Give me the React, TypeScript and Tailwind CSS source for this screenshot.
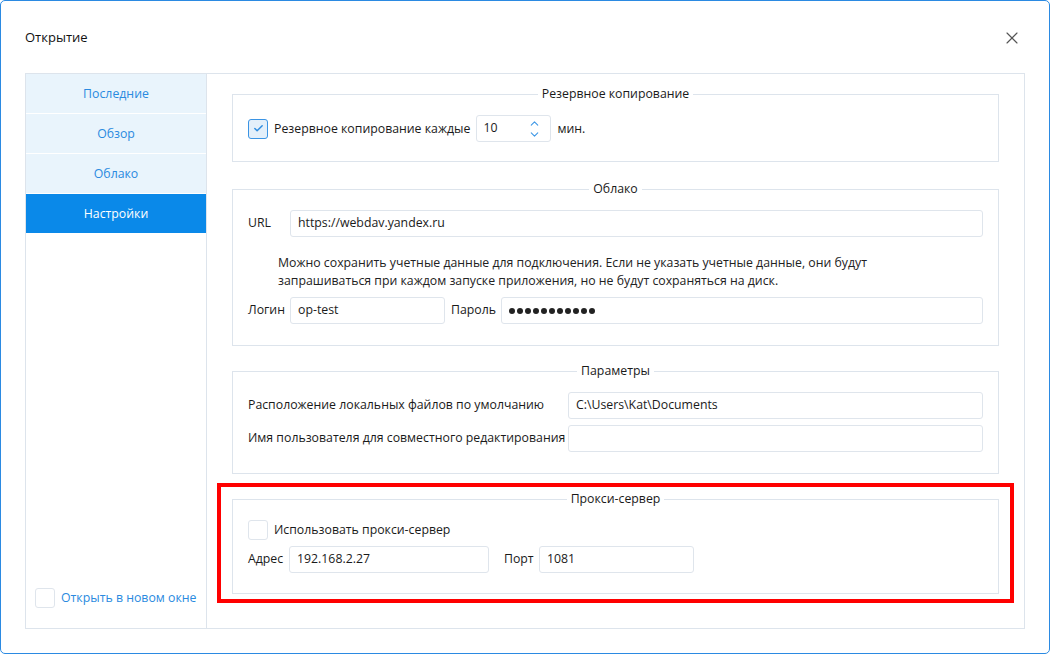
import { X, ChevronUp, ChevronDown, Check } from 'lucide-react';

const font = { fontFamily: '"Open Sans", "Noto Sans", sans-serif' };

function CheckBox({ checked = false }: { checked?: boolean }) {
  return (
    <div
      className={`w-[20px] h-[20px] rounded-[3px] border flex items-center justify-center shrink-0 ${
        checked ? 'border-[#3b94e4] bg-[#e3effa]' : 'border-[#dfe5ec] bg-white'
      }`}
    >
      {checked && <Check size={11} strokeWidth={3.2} className="text-[#2e8ce0]" />}
    </div>
  );
}

function Field({
  value = '',
  className = '',
  children,
}: {
  value?: string;
  className?: string;
  children?: React.ReactNode;
}) {
  return (
    <div
      className={`h-[27px] border border-[#dfe5ec] rounded-[3px] bg-white flex items-center px-[7px] text-[#1a1a1a] ${className}`}
    >
      {children ?? value}
    </div>
  );
}

function Group({ title, children, className = '' }: { title: string; children: React.ReactNode; className?: string }) {
  return (
    <fieldset className={`border border-[#dde4ec] px-[15px] ${className}`}>
      <legend className="mx-auto px-[4px] leading-[18px] text-[#1a1a1a]">{title}</legend>
      {children}
    </fieldset>
  );
}

const tabs = ['Последние', 'Обзор', 'Облако', 'Настройки'];

export default function App() {
  return (
    <div
      style={font}
      className="w-[1050px] h-[654px] bg-white border border-[#2b8ae2] rounded-[5px] text-[12.3px] text-[#1a1a1a] flex flex-col whitespace-nowrap"
    >
      <div className="h-[72px] flex items-center justify-between pl-[24px] pr-[27px] pt-[2px] shrink-0">
        <span className="text-[13px] text-[#111]">Открытие</span>
        <X size={20} strokeWidth={1.4} className="text-[#555]" />
      </div>

      <div className="mx-[24px] h-[556px] border border-[#dde4ec] flex">
        <div className="w-[181px] border-r border-[#dde4ec] flex flex-col">
          {tabs.map((t) => (
            <div
              key={t}
              className={`h-[40px] pt-[2px] flex items-center justify-center border-b border-white ${
                t === 'Настройки' ? 'bg-[#0a89e9] text-white' : 'bg-[#e9f4fc] text-[#2a8ae0]'
              }`}
            >
              {t}
            </div>
          ))}
          <div className="flex-1" />
          <div className="flex items-center gap-[6px] pl-[9px] pb-[20px]">
            <CheckBox />
            <span className="text-[#2a8ae0]">Открыть в новом окне</span>
          </div>
        </div>

        <div className="flex-1 px-[25px] pt-[11px]">
          <Group title="Резервное копирование" className="pb-[19px]">
            <div className="mt-[12px] flex items-center h-[27px]">
              <CheckBox checked />
              <span className="ml-[6px] pt-[1px]">Резервное копирование каждые</span>
              <div className="ml-[6px] w-[75px] h-[27px] border border-[#dfe5ec] rounded-[3px] flex items-center justify-between pl-[6px] pr-[9px]">
                <span>10</span>
                <div className="flex flex-col items-center text-[#3f98e6] -space-y-[2px]">
                  <ChevronUp size={13} strokeWidth={2} />
                  <ChevronDown size={13} strokeWidth={2} />
                </div>
              </div>
              <span className="ml-[6px] pt-[1px]">мин.</span>
            </div>
          </Group>

          <Group title="Облако" className="mt-[18px] pb-[21px]">
            <div className="mt-[12px] flex items-center">
              <span className="w-[42px]">URL</span>
              <Field value="https://webdav.yandex.ru" className="flex-1" />
            </div>
            <p className="mt-[17px] pl-[30px] leading-[18px] text-[#222]">
              Можно сохранить учетные данные для подключения. Если не указать учетные данные, они будут
              <br />
              запрашиваться при каждом запуске приложения, но не будут сохраняться на диск.
            </p>
            <div className="mt-[7px] flex items-center">
              <span className="w-[42px]">Логин</span>
              <Field value="op-test" className="w-[155px]" />
              <span className="ml-[6px] w-[50px]">Пароль</span>
              <Field className="flex-1">
                <div className="flex gap-[2px]">
                  {Array.from({ length: 11 }).map((_, i) => (
                    <div key={i} className="w-[6px] h-[6px] rounded-full bg-[#222]" />
                  ))}
                </div>
              </Field>
            </div>
          </Group>

          <Group title="Параметры" className="mt-[16px] pb-[21px]">
            <div className="mt-[12px] flex items-center">
              <span className="w-[320px]">Расположение локальных файлов по умолчанию</span>
              <Field value="C:\Users\Kat\Documents" className="flex-1" />
            </div>
            <div className="mt-[6px] flex items-center">
              <span className="w-[320px]">Имя пользователя для совместного редактирования</span>
              <Field className="flex-1" />
            </div>
          </Group>

          <div className="mt-[9px] -mx-[15px] border-[4px] border-[#ff0000] px-[11px] pt-[3px] pb-[5px]">
            <Group title="Прокси-сервер" className="pb-[20px]">
              <div className="mt-[12px] flex items-center">
                <CheckBox />
                <span className="ml-[6px]">Использовать прокси-сервер</span>
              </div>
              <div className="mt-[6px] flex items-center">
                <span className="w-[41px]">Адрес</span>
                <Field value="192.168.2.27" className="w-[200px]" />
                <span className="ml-[15px] w-[35px]">Порт</span>
                <Field value="1081" className="w-[155px]" />
              </div>
            </Group>
          </div>
        </div>
      </div>
    </div>
  );
}
